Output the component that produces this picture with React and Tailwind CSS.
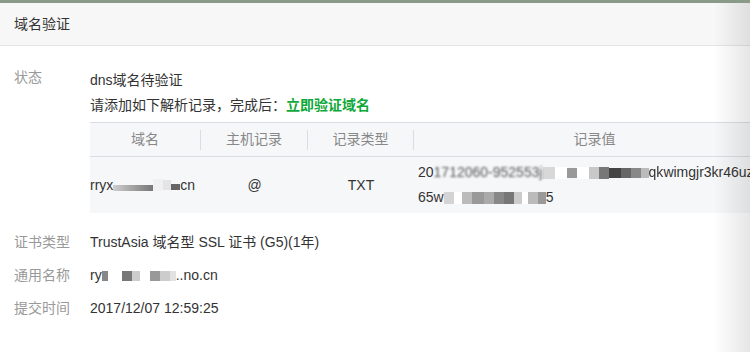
export default function App() {
  return (
    <div className="relative w-[750px] h-[352px] overflow-hidden bg-white text-[14px] text-[#333] font-['Liberation_Sans','Noto_Sans_CJK_SC',sans-serif]">
      <div className="h-[3px] bg-[#8a9a88]" />

      {/* Header */}
      <div className="h-[43px] flex items-center px-[14px] bg-[#f7f7f7] border-b border-[#e5e5e5] text-[#333]">
        域名验证
      </div>

      <div className="pt-[22px]">
        {/* 状态 */}
        <div className="flex">
          <div className="w-[90px] pl-[14px] leading-[18px] text-[#999] shrink-0">状态</div>
          <div className="flex-1 min-w-0">
            <div className="leading-[25px]">dns域名待验证</div>
            <div className="leading-[25px]">
              请添加如下解析记录，完成后：
              <span className="text-[#10a83a] font-bold">立即验证域名</span>
            </div>

            {/* Record table */}
            <div className="mt-[4px] w-[685px] text-[14px]">
              <div className="h-[35px] flex items-center bg-[#f6f7f9] border-y border-[#dcdde4] text-[#888]">
                <div className="w-[110px] text-center">域名</div>
                <div className="w-px h-[20px] bg-[#dcdde2]" />
                <div className="w-[106px] text-center">主机记录</div>
                <div className="w-px h-[20px] bg-[#dcdde2]" />
                <div className="w-[105px] text-center">记录类型</div>
                <div className="w-px h-[20px] bg-[#dcdde2]" />
                <div className="flex-1 text-center">记录值</div>
              </div>
              <div className="h-[56px] flex items-center bg-[#f6f7f9]">
                <div className="w-[111px] flex items-center whitespace-nowrap">
                  rryx
                  <span className="inline-block w-[40px] h-[6px] mt-[6px] bg-gradient-to-r from-[#cfcfcf] to-[#777]" />
                  <span className="inline-block w-[10px] h-[12px] bg-[#f0f0f2]" />
                  <span className="inline-block w-[8px] h-[10px] bg-[#e4e4e6]" />
                  <span className="inline-block w-[9px] h-[6px] mt-[4px] bg-[#666]" />
                  cn
                </div>
                <div className="w-[107px] text-center">@</div>
                <div className="w-[106px] text-center">TXT</div>
                <div className="flex-1 pl-[4px] leading-[25px] whitespace-nowrap">
                  <div className="flex items-center">
                    20<span className="blur-[0.8px] text-[#555]">1712060-952553j</span>
                    <span className="inline-block w-[12px] h-[12px] bg-[#d8d8d8]" />
                    <span className="inline-block w-[12px] h-[12px] bg-white" />
                    <span className="inline-block w-[10px] h-[10px] bg-[#999]" />
                    <span className="inline-block w-[12px] h-[12px] bg-white" />
                    <span className="inline-block w-[10px] h-[12px] bg-[#c8c8c8]" />
                    <span className="inline-block w-[10px] h-[12px] bg-[#777]" />
                    <span className="inline-block w-[12px] h-[10px] bg-[#444]" />
                    <span className="inline-block w-[10px] h-[10px] bg-[#666]" />
                    <span className="inline-block w-[10px] h-[10px] bg-[#888]" />
                    <span className="inline-block w-[8px] h-[10px] bg-[#bbb]" />
                    <span className="blur-[0.6px]">qk</span>wimgjr3kr46uzra
                  </div>
                  <div className="flex items-center">
                    65w
                    <span className="inline-block w-[10px] h-[12px] bg-[#d4d4d4]" />
                    <span className="inline-block w-[8px] h-[12px] bg-white" />
                    <span className="inline-block w-[10px] h-[12px] bg-[#bbb]" />
                    <span className="inline-block w-[12px] h-[12px] bg-[#999]" />
                    <span className="inline-block w-[10px] h-[12px] bg-[#aaa]" />
                    <span className="inline-block w-[10px] h-[12px] bg-[#888]" />
                    <span className="inline-block w-[10px] h-[12px] bg-[#777]" />
                    <span className="inline-block w-[8px] h-[12px] bg-[#ccc]" />
                    <span className="inline-block w-[6px] h-[12px] bg-white" />
                    <span className="inline-block w-[10px] h-[12px] bg-[#bbb]" />
                    <span className="inline-block w-[8px] h-[12px] bg-[#999]" />
                    5
                  </div>
                </div>
              </div>
            </div>
          </div>
        </div>

        {/* Info rows */}
        <div className="mt-[13px]">
          <div className="h-[33px] flex items-center">
            <div className="w-[90px] pl-[14px] text-[#999] shrink-0">证书类型</div>
            <div>TrustAsia 域名型 SSL 证书 (G5)(1年)</div>
          </div>
          <div className="h-[33px] flex items-center">
            <div className="w-[90px] pl-[14px] text-[#999] shrink-0">通用名称</div>
            <div className="flex items-center whitespace-nowrap">
              ry
              <span className="inline-block w-[6px] h-[10px] bg-[#888]" />
              <span className="inline-block w-[14px] h-[10px] bg-white" />
              <span className="inline-block w-[10px] h-[10px] bg-[#777]" />
              <span className="inline-block w-[8px] h-[10px] bg-[#ccc]" />
              <span className="inline-block w-[10px] h-[10px] bg-white" />
              <span className="inline-block w-[10px] h-[10px] bg-[#999]" />
              <span className="inline-block w-[10px] h-[10px] bg-[#ccc]" />
              <span className="inline-block w-[6px] h-[10px] bg-[#e2e2e2]" />
              ..no.cn
            </div>
          </div>
          <div className="h-[33px] flex items-center">
            <div className="w-[90px] pl-[14px] text-[#999] shrink-0">提交时间</div>
            <div>2017/12/07 12:59:25</div>
          </div>
        </div>
      </div>

      {/* right edge shadow */}
      <div className="absolute right-0 top-[3px] bottom-0 w-[36px] bg-gradient-to-r from-black/0 to-black/10 pointer-events-none" />
    </div>
  );
}
